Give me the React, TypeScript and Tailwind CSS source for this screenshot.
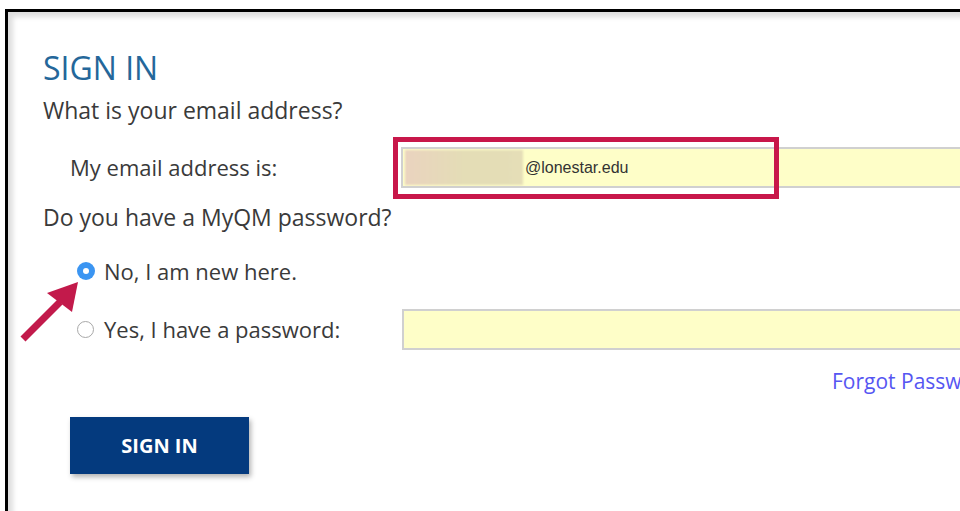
import React from 'react'

const font = { fontFamily: '"Open Sans", "Noto Sans", sans-serif' }

const Radio = ({ checked }: { checked?: boolean }) =>
  checked ? (
    <span className="flex h-[18px] w-[18px] items-center justify-center rounded-full bg-[#3b95f2]">
      <span className="h-[6px] w-[6px] rounded-full bg-white" />
    </span>
  ) : (
    <span className="h-[17px] w-[17px] rounded-full border border-[#a8a8a8] bg-white" />
  )

export default function App() {
  return (
    <div className="relative h-[511px] w-[960px] overflow-hidden bg-white pl-[5px] pt-[9px]" style={font}>
      <div className="h-[620px] w-[1100px] border-l-[3px] border-t-[3px] border-black">
        <div className="h-full w-full pl-[35px] pt-[36px] text-[#3a3a3a] shadow-[inset_5px_5px_5px_rgba(0,0,0,0.13)]">
          <h1 className="text-[32px] leading-[40px] text-[#24679a]">SIGN IN</h1>
          <p className="mt-[7px] text-[23px] leading-[30px]">What is your email address?</p>

          <div className="mt-[22px] flex h-[41px] items-center">
            <span className="ml-[27px] w-[331px] text-[22px]">My email address is:</span>
            <div className="relative h-[41px] flex-1 border-2 border-[#d0d0d0] bg-[#fefec8]">
              <div className="flex h-full items-center">
                <span className="ml-[2px] h-[35px] w-[118px] bg-gradient-to-r from-[#ead3bf] via-[#e4ddb6] to-[#e5deb7] blur-[1px]" />
                <span className="ml-[2px] text-[16px] text-[#333]" style={{ fontFamily: '"Liberation Sans", Arial, sans-serif' }}>
                  @lonestar.edu
                </span>
              </div>
              <div className="absolute left-[-10px] top-[-12px] h-[62px] w-[386px] border-[5px] border-[#c8174a]" />
            </div>
          </div>

          <p className="mt-[14px] text-[23px] leading-[30px]">Do you have a MyQM password?</p>

          <div className="mt-[26px] flex h-[26px] items-center pl-[34px]">
            <Radio checked />
            <span className="ml-[9px] text-[22px]">No, I am new here.</span>
          </div>

          <div className="mt-[25px] flex h-[41px] items-center pl-[34px]">
            <Radio />
            <span className="ml-[10px] w-[298px] text-[22px]">Yes, I have a password:</span>
            <div className="h-[41px] flex-1 border-2 border-[#d0d0d0] bg-[#fefec8]" />
          </div>

          <div className="mt-[16px] pl-[789px]">
            <a className="whitespace-nowrap text-[21px] leading-[30px] text-[#5656f2]">Forgot Password?</a>
          </div>

          <button className="ml-[27px] mt-[21px] h-[57px] w-[179px] bg-[#043a7e] text-[20px] font-bold text-white shadow-[2px_3px_5px_rgba(0,0,0,0.3)]">
            SIGN IN
          </button>
        </div>
      </div>

      {/* pointer arrow */}
      <svg className="absolute left-0 top-0" width="120" height="360" viewBox="0 0 120 360">
        <line x1="23" y1="339" x2="60" y2="302" stroke="#c21a4b" strokeWidth="7" />
        <polygon points="78,282 47,293 72,312" fill="#c21a4b" />
      </svg>
    </div>
  )
}
